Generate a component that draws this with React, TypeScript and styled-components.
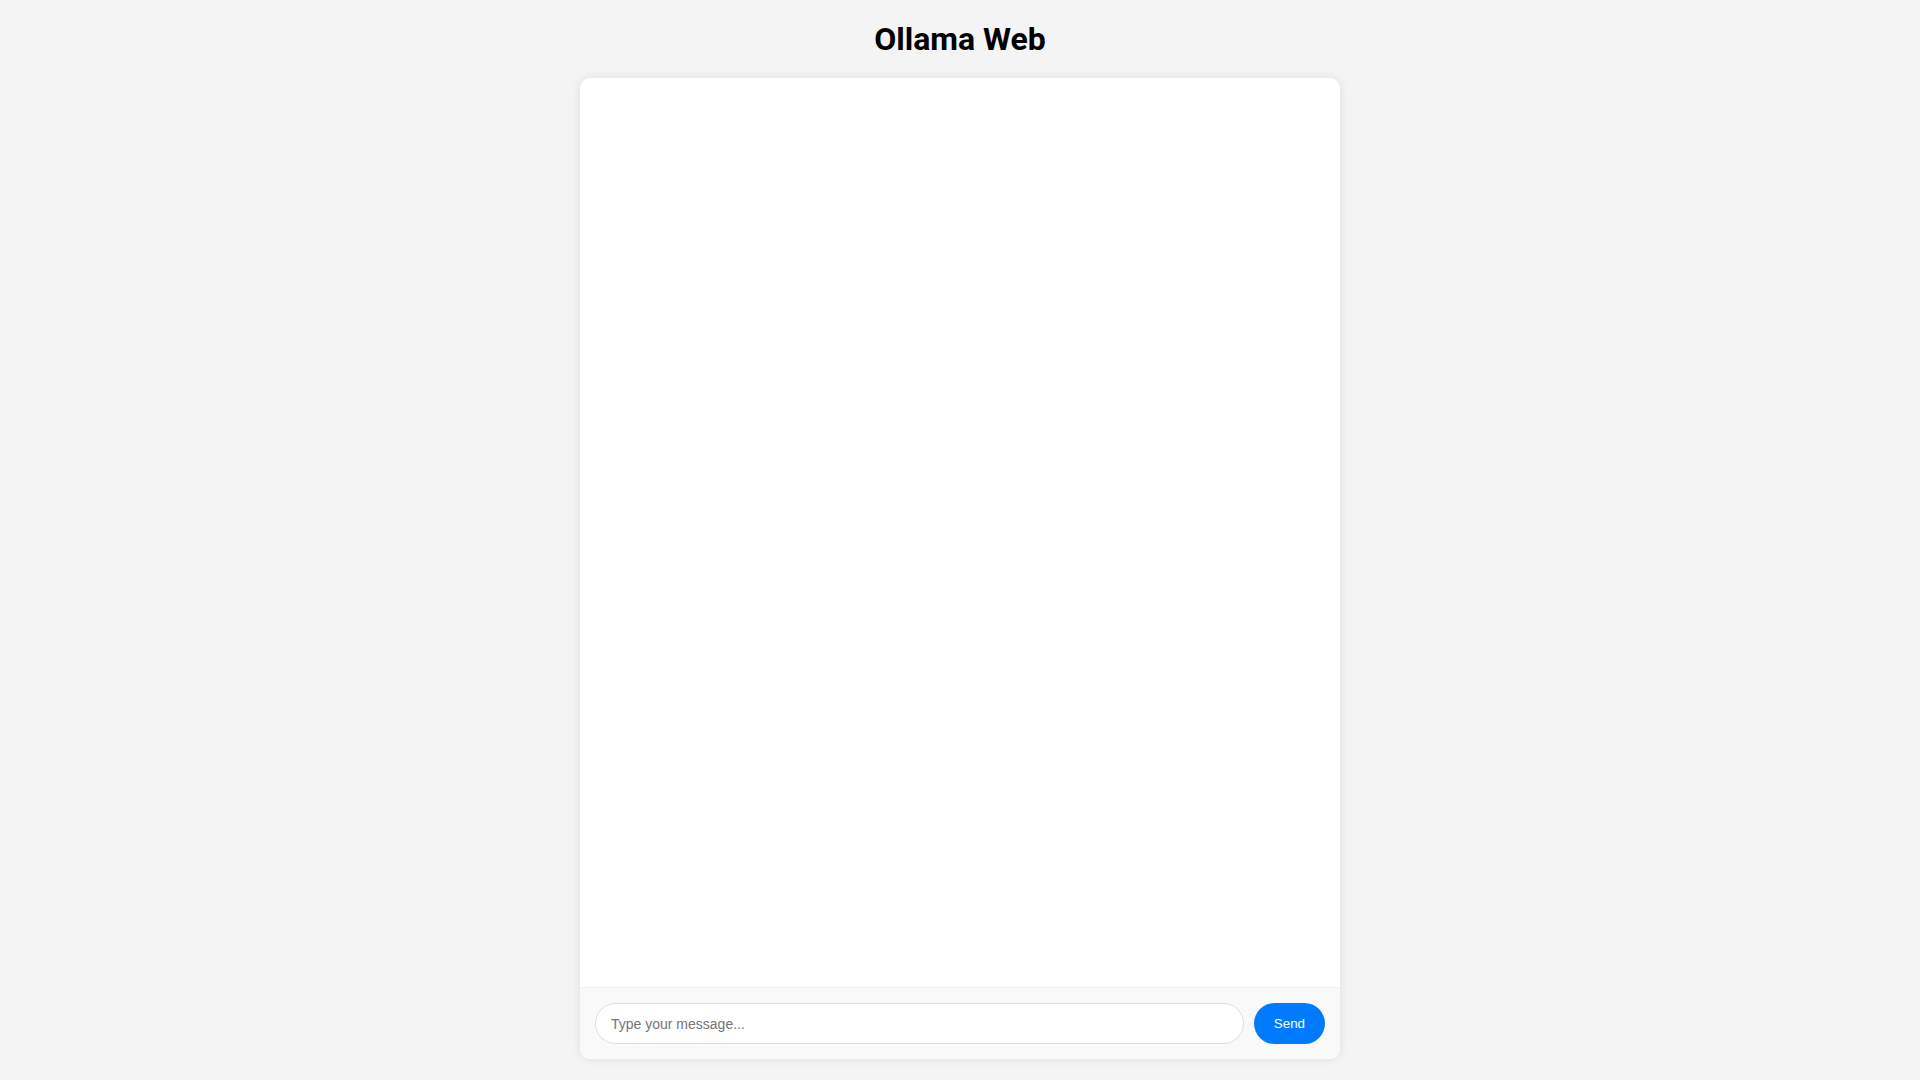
import React, { useState } from "react";
import styled, { createGlobalStyle } from "styled-components";

const GlobalStyle = createGlobalStyle`
  html, body { margin: 0; padding: 0; }
  body {
    background: #f4f4f4;
    font-family: "Liberation Sans", Arial, sans-serif;
  }
  * { box-sizing: border-box; }
`;

const Page = styled.div`
  display: flex;
  flex-direction: column;
  align-items: center;
  height: 100vh;
  padding: 20px 20px 21px;
`;

const Title = styled.h1`
  margin: 0 0 20px;
  font-family: Roboto, "Liberation Sans", sans-serif;
  font-weight: 700;
  font-size: 32px;
  line-height: 38px;
  color: #000;
`;

const ChatCard = styled.div`
  flex: 1;
  width: 760px;
  display: flex;
  flex-direction: column;
  background: #fff;
  border-radius: 10px;
  box-shadow: 0 0 10px rgba(0, 0, 0, 0.1);
  overflow: hidden;
`;

const Messages = styled.div`
  flex: 1;
  overflow-y: auto;
  padding: 20px;
`;

const InputBar = styled.form`
  display: flex;
  gap: 10px;
  padding: 15px;
  background: #f9f9f9;
  border-top: 1px solid #eee;
`;

const MessageInput = styled.input`
  flex: 1;
  height: 41px;
  padding: 0 15px;
  border: 1px solid #ddd;
  border-radius: 21px;
  font-family: "Liberation Sans", Arial, sans-serif;
  font-size: 14px;
  background: #fff;
  outline: none;
  &::placeholder { color: #757575; }
`;

const SendButton = styled.button`
  height: 41px;
  padding: 0 20px;
  border: none;
  border-radius: 21px;
  background: #007bff;
  color: #fff;
  font-family: "Liberation Sans", Arial, sans-serif;
  font-size: 13.33px;
  cursor: pointer;
`;

export default function App() {
  const [text, setText] = useState("");
  return (
    <>
      <GlobalStyle />
      <Page>
        <Title>Ollama Web</Title>
        <ChatCard>
          <Messages />
          <InputBar onSubmit={(e) => { e.preventDefault(); setText(""); }}>
            <MessageInput
              placeholder="Type your message..."
              value={text}
              onChange={(e) => setText(e.target.value)}
            />
            <SendButton type="submit">Send</SendButton>
          </InputBar>
        </ChatCard>
      </Page>
    </>
  );
}
